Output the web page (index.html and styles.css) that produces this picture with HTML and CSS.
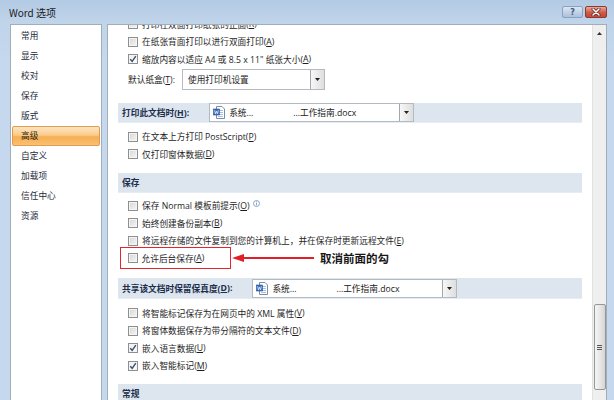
FILE: index.html
```html
<!DOCTYPE html>
<html lang="zh-CN">
<head>
<meta charset="utf-8">
<title>Word 选项</title>
<link rel="stylesheet" href="styles.css">
</head>
<body>
<div class="window">
  <div class="titlebar">
    <span class="title">Word 选项</span>
    <div class="tbtns">
      <span class="btn help">?</span>
      <span class="btn close"><svg width="10" height="8" viewBox="0 0 10 8"><path d="M2 1 L8 7 M8 1 L2 7" stroke="#5a1d1a" stroke-width="3" stroke-linecap="round"/><path d="M2 1 L8 7 M8 1 L2 7" stroke="#fff" stroke-width="1.6" stroke-linecap="round"/></svg></span>
    </div>
  </div>
  <div class="main">
    <ul class="nav">
      <li>常用</li>
      <li>显示</li>
      <li>校对</li>
      <li>保存</li>
      <li>版式</li>
      <li class="sel-item">高级</li>
      <li>自定义</li>
      <li>加载项</li>
      <li>信任中心</li>
      <li>资源</li>
    </ul>
    <div class="panel">
      <div class="scroll">
        <div class="list">
          <div class="row"><span class="cb"></span>打印在双面打印纸张的正面(<u>R</u>)</div>
          <div class="row"><span class="cb"></span>在纸张背面打印以进行双面打印(<u>A</u>)</div>
          <div class="row"><span class="cb on"><svg width="8" height="8" viewBox="0 0 8 8"><path d="M1.2 4.2 L3.2 6.3 L6.8 1.2" fill="none" stroke="#3d4f6e" stroke-width="1.4"/></svg></span>缩放内容以适应 A4 或 8.5 x 11" 纸张大小(<u>A</u>)</div>
          <div class="row tray">默认纸盒(<u>T</u>):
            <span class="select tray-sel"><span class="val">使用打印机设置</span><span class="dd"><svg width="5" height="3" viewBox="0 0 5 3"><path d="M0 0 H5 L2.5 3 Z" fill="#222"/></svg></span></span>
          </div>

          <div class="band b1">打印此文档时(<u>H</u>):
            <span class="select doc-sel"><svg class="docicon" width="12" height="13" viewBox="0 0 12 13"><path d="M3.5 0.5 H9 L11.5 3 V12.5 H3.5 Z" fill="#fff" stroke="#7d8ca3"/><path d="M5 4.5 H10 M5 6.5 H10 M5 8.5 H10 M5 10.5 H10" stroke="#8fb0db" stroke-width="0.8"/><rect x="0.5" y="3" width="6" height="6" fill="#3c6fc0" stroke="#25509a" stroke-width="0.6"/><path d="M1.6 4.4 L2.5 7.8 L3.5 5.2 L4.5 7.8 L5.4 4.4" fill="none" stroke="#fff" stroke-width="0.7"/></svg><span class="val">系统…</span><span class="val right">…工作指南.docx</span><span class="dd"><svg width="5" height="3" viewBox="0 0 5 3"><path d="M0 0 H5 L2.5 3 Z" fill="#222"/></svg></span></span>
          </div>
          <div class="row first"><span class="cb"></span>在文本上方打印 PostScript(<u>P</u>)</div>
          <div class="row"><span class="cb"></span>仅打印窗体数据(<u>D</u>)</div>

          <div class="band b2">保存</div>
          <div class="row first2"><span class="cb"></span>保存 Normal 模板前提示(<u>O</u>)<svg class="info" width="7" height="7" viewBox="0 0 7 7"><circle cx="3.5" cy="3.5" r="3" fill="none" stroke="#6f8fbe" stroke-width="0.8"/><rect x="3.1" y="1.4" width="0.8" height="0.8" fill="#6f8fbe"/><rect x="3.1" y="2.8" width="0.8" height="2.6" fill="#6f8fbe"/></svg></div>
          <div class="row"><span class="cb"></span>始终创建备份副本(<u>B</u>)</div>
          <div class="row"><span class="cb"></span>将远程存储的文件复制到您的计算机上，并在保存时更新远程文件(<u>E</u>)</div>
          <div class="row annot">
            <span class="mark"><span class="cb"></span>允许后台保存(<u>A</u>)</span>
            <svg class="arrow" width="82" height="10" viewBox="0 0 82 10"><path d="M0 5 L12 1 L12 9 Z" fill="#e11f26"/><rect x="11" y="4" width="71" height="2" fill="#e11f26"/></svg>
            <span class="note">取消前面的勾</span>
          </div>

          <div class="band b3">共享该文档时保留保真度(<u>D</u>):
            <span class="select doc-sel"><svg class="docicon" width="12" height="13" viewBox="0 0 12 13"><path d="M3.5 0.5 H9 L11.5 3 V12.5 H3.5 Z" fill="#fff" stroke="#7d8ca3"/><path d="M5 4.5 H10 M5 6.5 H10 M5 8.5 H10 M5 10.5 H10" stroke="#8fb0db" stroke-width="0.8"/><rect x="0.5" y="3" width="6" height="6" fill="#3c6fc0" stroke="#25509a" stroke-width="0.6"/><path d="M1.6 4.4 L2.5 7.8 L3.5 5.2 L4.5 7.8 L5.4 4.4" fill="none" stroke="#fff" stroke-width="0.7"/></svg><span class="val">系统…</span><span class="val right">…工作指南.docx</span><span class="dd"><svg width="5" height="3" viewBox="0 0 5 3"><path d="M0 0 H5 L2.5 3 Z" fill="#222"/></svg></span></span>
          </div>
          <div class="row first3"><span class="cb"></span>将智能标记保存为在网页中的 XML 属性(<u>V</u>)</div>
          <div class="row"><span class="cb"></span>将窗体数据保存为带分隔符的文本文件(<u>D</u>)</div>
          <div class="row"><span class="cb on"><svg width="8" height="8" viewBox="0 0 8 8"><path d="M1.2 4.2 L3.2 6.3 L6.8 1.2" fill="none" stroke="#3d4f6e" stroke-width="1.4"/></svg></span>嵌入语言数据(<u>U</u>)</div>
          <div class="row"><span class="cb on"><svg width="8" height="8" viewBox="0 0 8 8"><path d="M1.2 4.2 L3.2 6.3 L6.8 1.2" fill="none" stroke="#3d4f6e" stroke-width="1.4"/></svg></span>嵌入智能标记(<u>M</u>)</div>

          <div class="band b4">常规</div>
        </div>
      </div>
      <div class="vscroll">
        <div class="up"><svg width="5" height="3" viewBox="0 0 5 3"><path d="M0 3 H5 L2.5 0 Z" fill="#333"/></svg></div>
        <div class="thumb"><span class="grip"></span></div>
      </div>
    </div>
  </div>
</div>
</body>
</html>
```
FILE: styles.css
```css
* { box-sizing: border-box; margin: 0; padding: 0; }
html, body { width: 614px; height: 400px; overflow: hidden; }
body {
  background: #c4d7ed;
  font-family: "Open Sans", "Noto Sans CJK SC", sans-serif;
  font-size: 8.7px;
  color: #1e1e1e;
}
u { text-decoration: underline; text-underline-offset: 1px; }

.window {
  height: 400px;
  display: flex;
  flex-direction: column;
  background: linear-gradient(#b3cae4 0, #c0d4ea 22px, #c5d8ed 60px, #c5d8ed 100%);
}

.titlebar {
  height: 24px;
  flex: none;
  display: flex;
  align-items: flex-start;
  padding: 0 7px 0 9px;
}
.title {
  font-family: "Noto Sans CJK SC", sans-serif;
  font-size: 10px;
  line-height: 25px;
  color: #1b1b1b;
}
.tbtns { margin-left: auto; display: flex; gap: 2px; margin-top: 6px; }
.btn {
  height: 12px;
  display: flex;
  align-items: center;
  justify-content: center;
  border-radius: 2px;
}
.help {
  width: 21px;
  background: linear-gradient(#dbe6f3, #a9c0dc);
  border: 1px solid #8aa2c2;
  color: #4a5a70;
  font-family: "DejaVu Sans", sans-serif;
  font-size: 8px;
  font-weight: bold;
}
.close {
  width: 22px;
  background: linear-gradient(#e9a99c, #cf5a45 55%, #c24a36);
  border: 1px solid #8d3b31;
}

.main {
  flex: 1;
  min-height: 0;
  display: flex;
  gap: 5px;
  padding: 0 7px 0 10px;
  overflow: hidden;
}

.nav {
  list-style: none;
  width: 92px;
  flex: none;
  height: 420px;
  background: #fff;
  border: 1px solid #a3adb9;
  padding-top: 1px;
  font-family: "Noto Sans CJK SC", sans-serif;
}
.nav li {
  height: 20px;
  line-height: 20px;
  padding-left: 10px;
  color: #1e2a3a;
}
.nav li.sel-item {
  margin: 0 1px;
  padding-left: 8px;
  line-height: 18px;
  border: 1px solid #e39c4b;
  border-radius: 2px;
  background: linear-gradient(#fde4c0 0%, #fbcb8c 45%, #f7ae52 55%, #fbc073 100%);
  color: #2a1f10;
}

.panel {
  flex: 1;
  height: 420px;
  background: #fff;
  border: 1px solid #a3adb9;
  display: flex;
  overflow: hidden;
}
.scroll {
  flex: 1;
  overflow: hidden;
  padding: 0 10px 0 10px;
}
.list { margin-top: -9.75px; }

.row {
  height: 17.5px;
  display: flex;
  align-items: center;
  padding-left: 10px;
  white-space: nowrap;
  color: #1e1e1e;
}
.cb {
  width: 10px;
  height: 10px;
  flex: none;
  margin-right: 4px;
  border: 1px solid #8e8f8f;
  background: linear-gradient(135deg, #d6d6d6, #f6f6f6);
  box-shadow: inset 0 0 0 1px #f4f4f4;
  display: flex;
  align-items: center;
  justify-content: center;
}
.cb.on { background: linear-gradient(135deg, #ececec, #ffffff); }

.tray { height: 24px; }
.select {
  display: flex;
  align-items: center;
  background: #fff;
  border: 1px solid #b4bac2;
}
.tray-sel { width: 143px; height: 21px; margin-left: 7px; padding-left: 5px; }
.dd {
  margin-left: auto;
  width: 14px;
  height: 100%;
  flex: none;
  border-left: 1px solid #a6a6a6;
  background: linear-gradient(90deg, #f7f7f7, #dedede);
  display: flex;
  align-items: center;
  justify-content: center;
}

.band {
  height: 20px;
  display: flex;
  align-items: center;
  padding-left: 4px;
  background: #dde6ef;
  border-bottom: 1px solid #e6edf4;
  font-weight: bold;
  color: #1c2e4c;
  white-space: nowrap;
}
.band .select { font-weight: normal; color: #222; }
.doc-sel {
  width: 205px;
  height: 19px;
  margin-left: 20px;
  padding-left: 3px;
}
.docicon { flex: none; margin-right: 4px; }
.val.right { margin-left: auto; margin-right: 3px; }

.b1 { margin-top: 11.25px; }
.b2 { margin-top: 10px; }
.b3 { margin-top: 11px; height: 21px; }
.b4 { margin-top: 9.75px; }
.first { margin-top: 5px; }
.first2 { margin-top: 4px; }
.first3 { margin-top: 5.25px; }

.info { margin-left: 3px; margin-top: -5px; }

.annot { padding-left: 2px; }
.mark {
  width: 111px;
  height: 22px;
  margin: -2.25px 0;
  padding-left: 6.5px;
  border: 1.5px solid #e3262c;
  display: flex;
  align-items: center;
}
.arrow { margin-left: 1px; margin-top: -1px; flex: none; }
.note {
  margin-left: 6px;
  font-family: "Noto Sans CJK SC", sans-serif;
  font-size: 11.5px;
  font-weight: bold;
  color: #161616;
}

.vscroll {
  width: 14px;
  flex: none;
  background: #efefef;
  border-left: 1px solid #e2e2e2;
  display: flex;
  flex-direction: column;
  align-items: center;
}
.up {
  height: 16px;
  display: flex;
  align-items: center;
  justify-content: center;
  width: 100%;
}
.thumb {
  margin-top: 263px;
  width: 12px;
  height: 86px;
  border: 1px solid #979797;
  border-radius: 2px;
  background: linear-gradient(90deg, #f5f5f5, #e4e4e4 60%, #d4d4d4);
  display: flex;
  align-items: center;
  justify-content: center;
}
.grip {
  width: 5px;
  height: 5px;
  background: repeating-linear-gradient(#555 0 1px, transparent 1px 2px);
}
```
